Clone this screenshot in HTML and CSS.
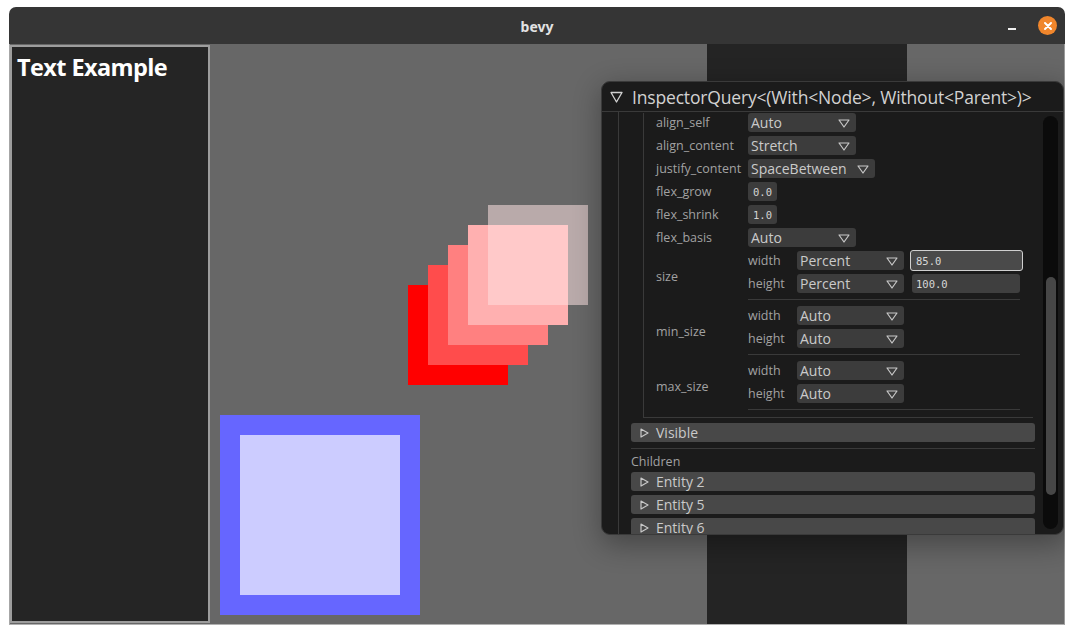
FILE: index.html
```html
<!DOCTYPE html>
<html>
<head>
<meta charset="utf-8">
<link rel="stylesheet" href="styles.css">
</head>
<body>
<div class="window">
  <div class="titlebar">
    <span class="title">bevy</span>
    <div class="controls">
      <span class="min"></span>
      <span class="close"><svg width="10" height="10" viewBox="0 0 10 10"><path d="M2 2 L8 8 M8 2 L2 8" stroke="#fff" stroke-width="2" stroke-linecap="round"/></svg></span>
    </div>
  </div>
  <div class="content">
    <aside class="side"><h1 class="side-title">Text Example</h1></aside>
    <main class="canvas">
      <div class="spacer"></div>
      <div class="strip"></div>
      <div class="rightpad"></div>

      <div class="sq sq1"></div>
      <div class="sq sq2"></div>
      <div class="sq sq3"></div>
      <div class="sq sq4"></div>
      <div class="sq sq5"></div>
      <div class="sq5-overlap"></div>
      <div class="blue"></div>

      <section class="insp">
        <header class="insp-head">
          <svg class="tri-down-big" width="13" height="12" viewBox="0 0 13 12"><path d="M1 1.5 H12 L6.5 11 Z" fill="none" stroke="#d0d0d0" stroke-width="1.3" stroke-linejoin="round"/></svg>
          <span class="insp-title">InspectorQuery&lt;(With&lt;Node&gt;, Without&lt;Parent&gt;)&gt;</span>
        </header>
        <div class="insp-body">
          <div class="tree">
            <div class="frame">
              <div class="row"><span class="lbl">align_self</span><span class="combo w108">Auto<svg class="ct" width="12" height="9" viewBox="0 0 12 9"><path d="M1 1 H11 L6 8 Z" fill="none" stroke="#c8c8c8" stroke-width="1.2" stroke-linejoin="round"/></svg></span></div>
              <div class="row"><span class="lbl">align_content</span><span class="combo w108">Stretch<svg class="ct" width="12" height="9" viewBox="0 0 12 9"><path d="M1 1 H11 L6 8 Z" fill="none" stroke="#c8c8c8" stroke-width="1.2" stroke-linejoin="round"/></svg></span></div>
              <div class="row"><span class="lbl">justify_content</span><span class="combo w127">SpaceBetween<svg class="ct" width="12" height="9" viewBox="0 0 12 9"><path d="M1 1 H11 L6 8 Z" fill="none" stroke="#c8c8c8" stroke-width="1.2" stroke-linejoin="round"/></svg></span></div>
              <div class="row"><span class="lbl">flex_grow</span><span class="num">0.0</span></div>
              <div class="row"><span class="lbl">flex_shrink</span><span class="num">1.0</span></div>
              <div class="row"><span class="lbl">flex_basis</span><span class="combo w108">Auto<svg class="ct" width="12" height="9" viewBox="0 0 12 9"><path d="M1 1 H11 L6 8 Z" fill="none" stroke="#c8c8c8" stroke-width="1.2" stroke-linejoin="round"/></svg></span></div>

              <div class="group">
                <span class="lbl glbl">size</span>
                <div class="subs">
                  <div class="sub"><span class="sublbl">width</span><span class="combo w107">Percent<svg class="ct" width="12" height="9" viewBox="0 0 12 9"><path d="M1 1 H11 L6 8 Z" fill="none" stroke="#c8c8c8" stroke-width="1.2" stroke-linejoin="round"/></svg></span><span class="input focus">85.0</span></div>
                  <div class="sub"><span class="sublbl">height</span><span class="combo w107">Percent<svg class="ct" width="12" height="9" viewBox="0 0 12 9"><path d="M1 1 H11 L6 8 Z" fill="none" stroke="#c8c8c8" stroke-width="1.2" stroke-linejoin="round"/></svg></span><span class="input">100.0</span></div>
                </div>
              </div>
              <div class="gsep"></div>
              <div class="group">
                <span class="lbl glbl">min_size</span>
                <div class="subs">
                  <div class="sub"><span class="sublbl">width</span><span class="combo w107">Auto<svg class="ct" width="12" height="9" viewBox="0 0 12 9"><path d="M1 1 H11 L6 8 Z" fill="none" stroke="#c8c8c8" stroke-width="1.2" stroke-linejoin="round"/></svg></span></div>
                  <div class="sub"><span class="sublbl">height</span><span class="combo w107">Auto<svg class="ct" width="12" height="9" viewBox="0 0 12 9"><path d="M1 1 H11 L6 8 Z" fill="none" stroke="#c8c8c8" stroke-width="1.2" stroke-linejoin="round"/></svg></span></div>
                </div>
              </div>
              <div class="gsep"></div>
              <div class="group">
                <span class="lbl glbl">max_size</span>
                <div class="subs">
                  <div class="sub"><span class="sublbl">width</span><span class="combo w107">Auto<svg class="ct" width="12" height="9" viewBox="0 0 12 9"><path d="M1 1 H11 L6 8 Z" fill="none" stroke="#c8c8c8" stroke-width="1.2" stroke-linejoin="round"/></svg></span></div>
                  <div class="sub"><span class="sublbl">height</span><span class="combo w107">Auto<svg class="ct" width="12" height="9" viewBox="0 0 12 9"><path d="M1 1 H11 L6 8 Z" fill="none" stroke="#c8c8c8" stroke-width="1.2" stroke-linejoin="round"/></svg></span></div>
                </div>
              </div>
              <div class="gsep last"></div>
            </div>

            <div class="hdr first"><svg class="tri-r" width="9" height="10" viewBox="0 0 9 10"><path d="M1 1 L8 5 L1 9 Z" fill="none" stroke="#c8c8c8" stroke-width="1.2" stroke-linejoin="round"/></svg><span>Visible</span></div>
            <div class="sep"></div>
            <div class="children">Children</div>
            <div class="hdr"><svg class="tri-r" width="9" height="10" viewBox="0 0 9 10"><path d="M1 1 L8 5 L1 9 Z" fill="none" stroke="#c8c8c8" stroke-width="1.2" stroke-linejoin="round"/></svg><span>Entity 2</span></div>
            <div class="hdr"><svg class="tri-r" width="9" height="10" viewBox="0 0 9 10"><path d="M1 1 L8 5 L1 9 Z" fill="none" stroke="#c8c8c8" stroke-width="1.2" stroke-linejoin="round"/></svg><span>Entity 5</span></div>
            <div class="hdr"><svg class="tri-r" width="9" height="10" viewBox="0 0 9 10"><path d="M1 1 L8 5 L1 9 Z" fill="none" stroke="#c8c8c8" stroke-width="1.2" stroke-linejoin="round"/></svg><span>Entity 6</span></div>
          </div>
          <div class="scrollbar"><div class="thumb"></div></div>
        </div>
      </section>
    </main>
  </div>
</div>
</body>
</html>
```
FILE: styles.css
```css
html, body {
  margin: 0;
  padding: 0;
  background: #ffffff;
}
body {
  font-family: "Open Sans", "Noto Sans", sans-serif;
}
.window {
  margin: 7px 0 0 9px;
  width: 1056px;
  height: 618px;
  display: flex;
  flex-direction: column;
  border-radius: 7px 7px 0 0;
  overflow: hidden;
}
.titlebar {
  height: 37px;
  flex: none;
  background: #353535;
  display: flex;
  align-items: center;
  justify-content: center;
  position: relative;
}
.title {
  font-family: "Noto Sans", sans-serif;
  font-weight: 700;
  font-size: 14px;
  color: #e2e2e2;
  margin-top: 1px;
}
.controls {
  position: absolute;
  right: 8px;
  top: 9px;
  display: flex;
  align-items: center;
  gap: 22px;
}
.min {
  width: 8px;
  height: 2px;
  background: #f0f0f0;
  margin-top: 6px;
}
.close {
  width: 19px;
  height: 19px;
  border-radius: 50%;
  background: #f0862c;
  display: flex;
  align-items: center;
  justify-content: center;
}
.content {
  flex: 1;
  display: flex;
  background: #676767;
  border-left: 1px solid #a6a6a6;
  border-right: 1px solid #9a9a9a;
  border-bottom: 1px solid #b0b0b0;
}
.side {
  width: 200px;
  flex: none;
  box-sizing: border-box;
  margin: 1px 0 1px 0;
  border: 2px solid #9d9d9d;
  background: #252525;
}
.side-title {
  margin: 5px 0 0 5px;
  font-family: "Open Sans", sans-serif;
  font-weight: 700;
  font-size: 23.5px;
  line-height: 30px;
  color: #ffffff;
  letter-spacing: -0.6px;
}
.canvas {
  flex: 1;
  display: flex;
  position: relative;
}
.spacer { flex: 1; }
.strip {
  width: 200px;
  flex: none;
  background: #242424;
}
.rightpad {
  width: 157px;
  flex: none;
}
.sq {
  position: absolute;
  width: 100px;
  height: 100px;
}
.sq1 { left: 198px; top: 241px; background: #ff0000; }
.sq2 { left: 218px; top: 221px; background: #ff4c4c; }
.sq3 { left: 238px; top: 201px; background: #ff8080; }
.sq4 { left: 258px; top: 181px; background: #ffb0b0; }
.sq5 { left: 278px; top: 161px; background: #b9aaaa; }
.sq5-overlap {
  position: absolute;
  left: 278px;
  top: 181px;
  width: 80px;
  height: 80px;
  background: #ffc9c9;
}
.blue {
  position: absolute;
  left: 10px;
  top: 371px;
  width: 200px;
  height: 200px;
  box-sizing: border-box;
  border: 20px solid #6666ff;
  background: #ccccff;
}

/* Inspector window */
.insp {
  position: absolute;
  left: 391px;
  top: 37px;
  width: 463px;
  height: 454px;
  box-sizing: border-box;
  background: #1b1b1b;
  border: 1px solid #3a3a3a;
  border-radius: 9px;
  box-shadow: 2px 8px 28px 2px rgba(0, 0, 0, 0.32);
  display: flex;
  flex-direction: column;
  overflow: hidden;
}
.insp-head {
  height: 29px;
  flex: none;
  display: flex;
  align-items: center;
  padding-left: 8px;
  border-bottom: 1px solid #3a3a3a;
}
.tri-down-big { margin-right: 9px; margin-top: 1px; }
.insp-title {
  font-size: 17.5px;
  color: #d2d2d2;
  font-weight: 400;
  letter-spacing: -0.17px;
}
.insp-body {
  flex: 1;
  display: flex;
  padding-right: 5px;
  overflow: hidden;
}
.tree {
  margin-left: 16px;
  width: 404px;
  flex: none;
  border-left: 1px solid #3a3a3a;
  padding-left: 12px;
  padding-top: 1px;
}
.frame {
  margin-left: 12px;
  width: 390px;
  box-sizing: border-box;
  border-left: 1px solid #3a3a3a;
  border-bottom: 1px solid #3a3a3a;
  padding-left: 12px;
  padding-bottom: 7px;
}
.row {
  height: 19px;
  display: flex;
  align-items: center;
  margin-bottom: 4px;
}
.lbl {
  width: 92px;
  flex: none;
  font-size: 12.5px;
  color: #a2a2a2;
  font-weight: 400;
  white-space: nowrap;
}
.glbl {
  margin-top: 8px;
}
.combo {
  height: 19px;
  box-sizing: border-box;
  background: #3c3c3c;
  border-radius: 3px;
  display: flex;
  align-items: center;
  justify-content: space-between;
  padding: 0 6px 0 3px;
  font-size: 14px;
  color: #cacaca;
  flex: none;
}
.w108 { width: 108px; }
.w127 { width: 127px; }
.w107 { width: 107px; }
.ct { flex: none; margin-top: 1px; }
.num {
  height: 19px;
  box-sizing: border-box;
  background: #3c3c3c;
  border-radius: 3px;
  padding: 0 5px;
  font-family: "DejaVu Sans Mono", monospace;
  font-size: 10.5px;
  color: #d4d4d4;
  display: flex;
  align-items: center;
}
.group {
  display: flex;
  align-items: center;
}
.subs {
  display: flex;
  flex-direction: column;
  gap: 4px;
}
.sub {
  height: 19px;
  display: flex;
  align-items: center;
}
.sublbl {
  width: 49px;
  flex: none;
  font-size: 12.5px;
  color: #a2a2a2;
}
.input {
  margin-left: 8px;
  width: 108px;
  height: 19px;
  box-sizing: border-box;
  background: #3f3f3f;
  border-radius: 3px;
  padding-left: 4px;
  font-family: "DejaVu Sans Mono", monospace;
  font-size: 10.5px;
  color: #d8d8d8;
  display: flex;
  align-items: center;
}
.input.focus {
  margin-left: 6px;
  width: 113px;
  height: 21px;
  margin-top: -1px;
  margin-bottom: -1px;
  background: #4a4a4a;
  border: 1px solid #d0d0d0;
  padding-left: 5px;
}
.gsep {
  margin: 6px 0 6px 92px;
  width: 272px;
  height: 1px;
  background: #3a3a3a;
}
.gsep.last { margin-bottom: 0; }
.hdr {
  height: 19px;
  margin-top: 4px;
  background: #484848;
  border-radius: 3px;
  display: flex;
  align-items: center;
  padding-left: 9px;
  font-size: 14px;
  color: #cacaca;
}
.hdr.first { margin-top: 5px; }
.tri-r { margin-right: 7px; flex: none; }
.sep {
  margin-top: 6px;
  height: 1px;
  background: #3a3a3a;
}
.children {
  height: 19px;
  margin: 3px 0 -3px 0;
  display: flex;
  align-items: center;
  font-size: 12.5px;
  color: #a2a2a2;
}
.scrollbar {
  margin: 4px 0 5px 8px;
  width: 15px;
  flex: none;
  background: #0b0b0b;
  border-radius: 8px;
  position: relative;
}
.thumb {
  position: absolute;
  left: 3px;
  top: 161px;
  width: 10px;
  height: 218px;
  border-radius: 5px;
  background: #474747;
}
```
